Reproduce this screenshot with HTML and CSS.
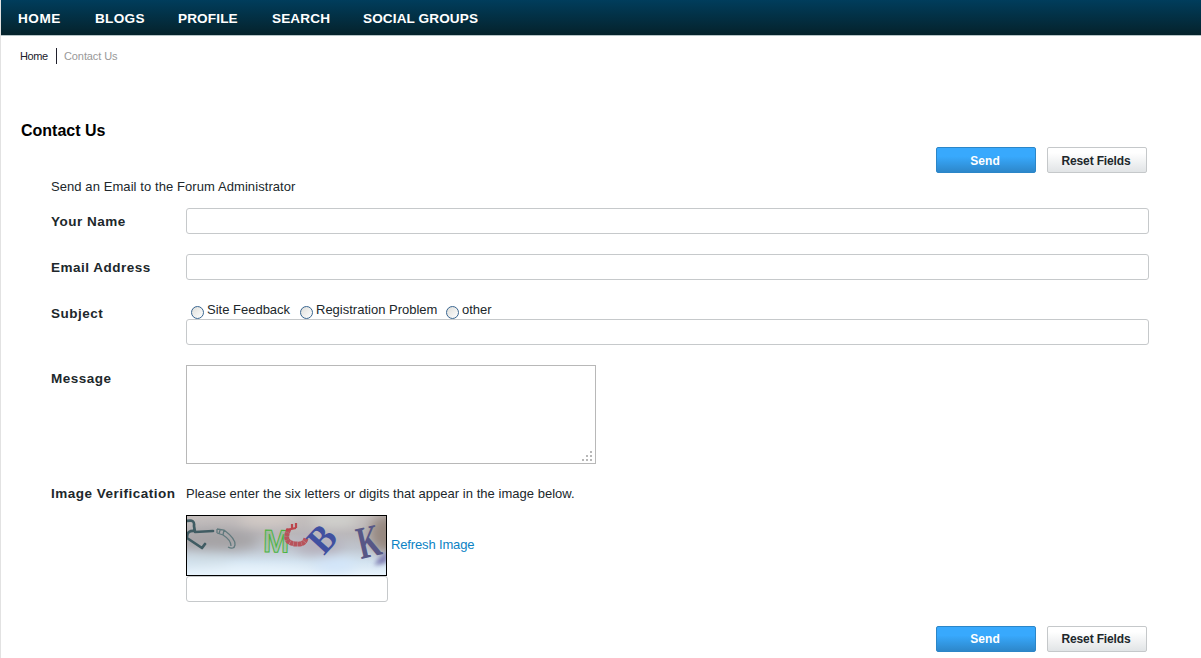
FILE: index.html
```html
<!DOCTYPE html>
<html lang="en">
<head>
<meta charset="utf-8">
<title>Contact Us</title>
<link rel="stylesheet" href="styles.css">
</head>
<body>
<div class="page">
  <nav class="nav">
    <a class="n-home">HOME</a><a class="n-blogs">BLOGS</a><a class="n-profile">PROFILE</a><a class="n-search">SEARCH</a><a class="n-groups">SOCIAL GROUPS</a>
  </nav>
  <div class="crumbs"><a>Home</a><span>Contact Us</span></div>
  <h1>Contact Us</h1>
  <form class="form">
    <div class="actions"><button type="button" class="btn primary">Send</button><button type="button" class="btn">Reset Fields</button></div>
    <p class="intro">Send an Email to the Forum Administrator</p>
    <div class="row"><label>Your Name</label><input class="field" type="text"></div>
    <div class="row"><label>Email Address</label><input class="field" type="text"></div>
    <div class="row subject"><label>Subject</label>
      <div>
        <div class="options">
          <span class="option o1"><i class="radio"></i><span>Site Feedback</span></span>
          <span class="option o2"><i class="radio"></i><span>Registration Problem</span></span>
          <span class="option"><i class="radio"></i><span>other</span></span>
        </div>
        <input class="field" type="text">
      </div>
    </div>
    <div class="row message"><label>Message</label>
      <div class="area"><svg class="grip" width="11" height="11" fill="#b8b8b8" shape-rendering="crispEdges"><path d="M8 0h2v2h-2zM4 4h2v2h-2zM8 4h2v2h-2zM0 8h2v2h-2zM4 8h2v2h-2zM8 8h2v2h-2z"/></svg></div>
    </div>
    <div class="row verify"><label>Image Verification</label>
      <div>
        <p class="hint">Please enter the six letters or digits that appear in the image below.</p>
        <div class="challenge">
          <svg class="picture" viewBox="0 0 199 59" width="199" height="59">
            <defs>
              <linearGradient id="sky" x2="0" y2="1"><stop offset="0" stop-color="#c5bfbd"/><stop offset=".3" stop-color="#b9b6b9"/><stop offset=".55" stop-color="#bfc5ce"/><stop offset=".78" stop-color="#d3e3f0"/><stop offset="1" stop-color="#e9f4fd"/></linearGradient>
              <filter id="soft" x="-50%" y="-50%" width="200%" height="200%"><feGaussianBlur stdDeviation="6"/></filter>
              <filter id="edge" x="-50%" y="-50%" width="200%" height="200%"><feGaussianBlur stdDeviation="2.2"/></filter>
            </defs>
            <rect width="199" height="59" fill="url(#sky)"/>
            <g filter="url(#soft)">
              <ellipse cx="30" cy="24" rx="42" ry="11" fill="#a5a3a5"/>
              <ellipse cx="80" cy="3" rx="28" ry="6" fill="#d6cdc8"/>
              <ellipse cx="148" cy="4" rx="24" ry="7" fill="#d2d3cf"/>
              <ellipse cx="198" cy="18" rx="15" ry="19" fill="#968880"/>
              <ellipse cx="132" cy="30" rx="24" ry="9" fill="#b5b0bc"/>
              <ellipse cx="20" cy="44" rx="25" ry="5" fill="#cfdde5"/>
              <ellipse cx="60" cy="57" rx="60" ry="6" fill="#e8f4fd"/>
              <ellipse cx="148" cy="49" rx="20" ry="7" fill="#d2e5fa"/>
            </g>
            <path d="M187 49Q193 39 202 35L199 47Q192 49 187 49Z" fill="#8180b4" filter="url(#edge)"/>
            <path d="M0 5Q8 3 7 10L8 16L26 15M8 15Q0 14 0 21M0 22L15 32L18 28" fill="none" stroke="#405c63" stroke-width="2.7" stroke-linecap="round" stroke-linejoin="round"/>
            <path d="M30 13L37 14Q49 23 48 29Q47 34 41 31M30 17L36 19Q44 24 44 30M30 13V17M33 14L32 18M37 14L36 19" fill="none" stroke="#60797d" stroke-width="1.3"/>
            <text class="glyph-m" transform="translate(76 36) rotate(1) scale(.98 1)">M</text>
            <path d="M102 13Q95 27 109 28Q118 29 119 22" fill="none" stroke="#b8535b" stroke-width="5" stroke-dasharray="3.5 .3"/>
            <path d="M99 14L109 12M105 8v5M109 7v5" fill="none" stroke="#bc444b" stroke-width="2.2"/>
            <text class="glyph-b" transform="translate(137 40) rotate(-48) scale(.88 1)">B</text>
            <text class="glyph-k" transform="translate(174 43) rotate(-13) scale(.64 1)">K</text>
          </svg>
          <a class="refresh">Refresh Image</a>
        </div>
        <input class="field code" type="text">
      </div>
    </div>
    <div class="actions bottom"><button type="button" class="btn primary">Send</button><button type="button" class="btn">Reset Fields</button></div>
  </form>
</div>
</body>
</html>
```
FILE: styles.css
```css
* { box-sizing: border-box; }
body { margin: 0; background: #e2e2e2; font: 13px/16px "Liberation Sans", Arial, sans-serif; color: #20272b; overflow: hidden; }
.page { margin-left: 1px; height: 658px; background: #fff; overflow: hidden; }
.nav { display: flex; height: 36px; padding-left: 17px; background: linear-gradient(#003d5c, #05222b); border-bottom: 1px solid #b6c4c7; color: #fff; font-weight: bold; font-size: 13.6px; line-height: 37px; white-space: nowrap; }
.nav a { letter-spacing: .3px; }
.nav .n-home { width: 77px; letter-spacing: .5px; }
.n-blogs { width: 83px; }
.n-profile { width: 94px; }
.nav .n-profile, .nav .n-search { letter-spacing: .12px; }
.n-search { width: 91px; }
.nav .n-groups { letter-spacing: .1px; }
.crumbs { display: flex; margin: 12px 0 0 19px; font-size: 11px; letter-spacing: -.1px; color: #999; }
.crumbs a { width: 37px; border-right: 1px solid #20202c; color: #20202c; margin-right: 7px; letter-spacing: -.4px; }
h1 { margin: 58px 0 0 20px; font-size: 16px; line-height: 18px; color: #000; }
.form { margin: 7px 52px 0 50px; }
.actions { display: flex; justify-content: flex-end; gap: 11px; padding-right: 2px; }
.btn { width: 100px; height: 26px; padding: 2px 2px 0 0; border: 1px solid #c5c8ca; border-radius: 2px; background: linear-gradient(#fff 20%, #e1e4e6); color: #20272b; font: bold 12px/22px "Liberation Sans", Arial, sans-serif; letter-spacing: -.15px; }
.primary { border-color: #2b86c8; background: linear-gradient(#38a9fd 35%, #2d87ca); color: #fff; letter-spacing: .1px; }
.bottom .btn { padding-top: 1px; line-height: 23px; }
.intro { margin: 6px 0 13px; letter-spacing: .08px; }
.row { display: grid; grid-template-columns: 135px 1fr; margin-bottom: 20px; }
.row label { font-size: 13.5px; font-weight: bold; letter-spacing: .5px; white-space: nowrap; padding-top: 6px; }
.field { display: block; width: 100%; height: 26px; border: 1px solid #c6c9cb; border-radius: 3px; background: #fff; outline: 0; padding: 0 5px; }
.options { display: flex; height: 19px; padding-left: 5px; }
.option { display: flex; gap: 3px; }
.o1 { width: 109px; }
.o2 { width: 146px; }
.radio { width: 13px; height: 13px; margin-top: 6px; border: 1px solid #386590; border-radius: 50%; background: linear-gradient(135deg, #dededa, #fff); }
.option span { margin-top: 2px; white-space: nowrap; }
.subject { margin-bottom: 20px; }
.message { margin-bottom: 22px; }
.area { display: flex; align-items: flex-end; justify-content: flex-end; width: 410px; height: 99px; border: 1px solid #b8b8b8; padding: 0 2px 1px 0; }
.verify label { padding-top: 0; }
.hint { margin: 0 0 13px; letter-spacing: .03px; }
.challenge { display: flex; align-items: center; gap: 4px; height: 61px; }
.picture { box-sizing: content-box; border: 1px solid #000; }
.refresh { color: #0c82c4; letter-spacing: -.15px; margin-top: -2px; }
.code { width: 202px; }
.bottom { margin-top: 24px; }
.glyph-m { font: bold 32px "Liberation Sans", sans-serif; fill: #62ba5540; stroke: #49b33e; stroke-width: 1; }
.glyph-b { font: bold 39px "Liberation Serif", serif; fill: #4050a0; }
.glyph-k { font: bold 46px "Liberation Serif", serif; fill: #575786; }
```
